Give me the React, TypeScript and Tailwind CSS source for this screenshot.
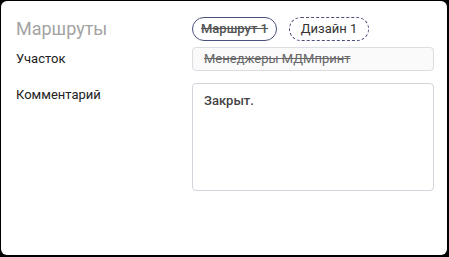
const font = { fontFamily: "Roboto, 'Liberation Sans', sans-serif" };

export default function App() {
  return (
    <div className="h-[257px] w-[449px] bg-black pb-[2px] pl-[1px] pr-[2px] pt-[1px]" style={font}>
      <div className="flex h-full w-full flex-col gap-[6px] rounded-[6px] bg-white pl-[15px] pr-[13px] pt-[16px]">
        <div className="flex h-[24px] items-center">
          <h2 className="w-[176px] text-[18px] leading-none text-[#a3a3a3]">Маршруты</h2>
          <div className="flex gap-[12px]">
            <span className="flex h-[24px] w-[85px] items-center justify-center rounded-full border border-[#4b4f7c] text-[13px] font-medium text-[#555] line-through">
              Маршрут 1
            </span>
            <span className="flex h-[24px] w-[80px] items-center justify-center rounded-full border border-dashed border-[#4b4f7c] text-[13px] text-[#333]">
              Дизайн 1
            </span>
          </div>
        </div>

        <div className="flex h-[24px] items-center">
          <span className="w-[176px] text-[13px] text-[#222]">Участок</span>
          <div className="flex h-full flex-1 items-center rounded-[4px] border border-[#dcdde3] bg-[#fafafb] px-[11px] text-[13px] text-[#666] line-through">
            Менеджеры МДМпринт
          </div>
        </div>

        <div className="mt-[6px] flex">
          <span className="w-[176px] pt-[2px] text-[13px] text-[#222]">Комментарий</span>
          <div className="h-[108px] flex-1 rounded-[4px] border border-[#d4d5dc] px-[11px] pt-[7px] text-[13px] font-medium text-[#444]">
            Закрыт.
          </div>
        </div>
      </div>
    </div>
  );
}
